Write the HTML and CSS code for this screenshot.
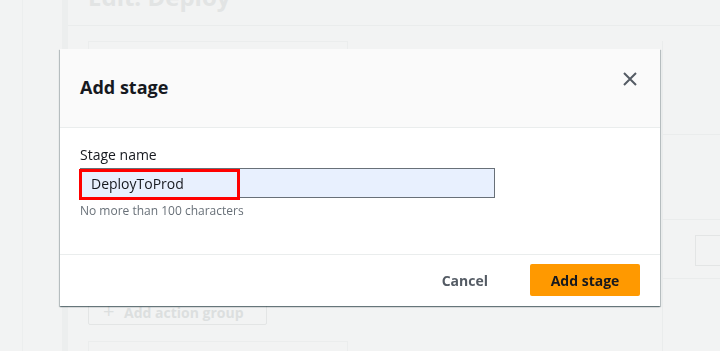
FILE: index.html
```html
<!DOCTYPE html>
<html lang="en">
<head>
  <meta charset="UTF-8" />
  <title>Edit: Deploy | Add stage</title>
  <meta name="viewport" content="width=device-width, initial-scale=1" />
  <link rel="stylesheet" href="styles.css">
</head>
<body>
  <!-- Página ao fundo (esmaecida pelo modal) -->
  <div class="page">
    <div class="rail"><div class="rail-line"></div></div>
    <div class="gutter"></div>
    <main class="main">
      <div class="main-head"><h1>Edit: Deploy</h1></div>
      <div class="stage-area">
        <div class="stage-col">
          <div class="group-card"></div>
          <button type="button" class="ghost-btn"><span class="plus">+</span> Add action group</button>
          <div class="group-card next"></div>
        </div>
        <div class="side-col">
          <div class="side-row first"></div>
          <div class="side-row second"></div>
          <div class="side-row third"><div class="side-box"></div></div>
        </div>
      </div>
    </main>
  </div>

  <!-- Modal -->
  <div class="overlay">
    <div class="modal">
      <div class="modal-header">
        <h2 class="modal-title">Add stage</h2>
        <button type="button" class="close-btn" aria-label="Close">
          <svg width="14" height="14" viewBox="0 0 14 14">
            <path d="M1 1 L13 13 M13 1 L1 13" stroke="#545b64" stroke-width="2" fill="none"/>
          </svg>
        </button>
      </div>
      <div class="modal-body">
        <label for="stageName" class="field-label">Stage name</label>
        <div class="input-wrap">
          <input type="text" id="stageName" class="field-input" value="DeployToProd">
          <div class="highlight"></div>
        </div>
        <div class="field-hint">No more than 100 characters</div>
      </div>
      <div class="modal-footer">
        <button type="button" class="cancel-btn">Cancel</button>
        <button type="button" class="primary-btn">Add stage</button>
      </div>
    </div>
  </div>
</body>
</html>
```

FILE: styles.css
```css
body {
  margin: 0;
  height: 351px;
  overflow: hidden;
  background: #f2f3f3;
  font-family: 'Open Sans', 'Noto Sans', Arial, sans-serif;
  color: #16191f;
}
button { font-family: inherit; }

/* fundo */
.page {
  display: flex;
  height: 351px;
}
.rail { width: 62px; }
.rail-line {
  width: 23px;
  height: 100%;
  border-right: 1px solid #eceeee;
  box-sizing: border-box;
}
.gutter {
  width: 6px;
  background: #eceeee;
}
.main {
  flex: 1;
  overflow: hidden;
}
.main-head {
  height: 25px;
  border-bottom: 1px solid #eaecec;
  padding-left: 20px;
  overflow: hidden;
}
.main-head h1 {
  margin: -17px 0 0 0;
  font-size: 24px;
  line-height: 28px;
  font-weight: 700;
  color: #e2e4e4;
}
.stage-area {
  display: flex;
  justify-content: space-between;
  padding: 15px 0 0 20px;
}
.stage-col { width: 260px; }
.group-card {
  height: 244px;
  border: 1px solid #ebeded;
  box-sizing: border-box;
}
.group-card.next { margin-top: 16px; }
.ghost-btn {
  margin-top: 11px;
  width: 179px;
  height: 29px;
  background: none;
  border: 1px solid #e3e5e5;
  border-radius: 2px;
  color: #dcdfdf;
  font-size: 14px;
  font-weight: 700;
  text-align: left;
  padding: 0 0 0 14px;
}
.ghost-btn .plus {
  font-size: 20px;
  font-weight: 400;
  margin-right: 6px;
}
.side-col {
  width: 57px;
  border-left: 1px solid #eaecec;
}
.side-row { border-bottom: 1px solid #eaecec; }
.side-row.first { height: 93px; }
.side-row.second { height: 84px; }
.side-row.third {
  height: 59px;
  padding: 15px 0 0 32px;
  box-sizing: border-box;
}
.side-box {
  height: 29px;
  border: 1px solid #e3e5e5;
  border-right: none;
}

/* modal */
.overlay {
  position: fixed;
  inset: 0;
  padding: 49px 0 0 60px;
}
.modal {
  width: 600px;
  background: #fff;
  box-shadow: 0 1px 1px 0 rgba(0, 28, 36, 0.35), 1px 1px 1px 0 rgba(0, 28, 36, 0.2), -1px 1px 1px 0 rgba(0, 28, 36, 0.2);
}
.modal-header {
  display: flex;
  justify-content: space-between;
  align-items: flex-start;
  background: #fafafa;
  border-bottom: 1px solid #eaeded;
  padding: 26px 23px 28px 20px;
}
.modal-title {
  margin: 0;
  font-size: 18px;
  line-height: 24px;
  font-weight: 700;
}
.close-btn {
  margin-top: -3px;
  background: none;
  border: none;
  padding: 0;
  cursor: pointer;
  line-height: 0;
}
.modal-body {
  padding: 16px 20px 34px 20px;
}
.field-label {
  display: block;
  font-size: 14px;
  line-height: 22px;
  margin-bottom: 2px;
}
.input-wrap {
  position: relative;
  width: 415px;
}
.field-input {
  display: block;
  width: 100%;
  box-sizing: border-box;
  height: 30px;
  margin: 0;
  padding: 0 10px;
  border: 1px solid #687078;
  border-radius: 0;
  background: #e8f0fe;
  font-family: inherit;
  font-size: 14px;
  color: #16191f;
  outline: none;
}
.highlight {
  position: absolute;
  left: -1px;
  top: 1px;
  width: 161px;
  height: 31px;
  border: 3px solid #ff0000;
  box-sizing: border-box;
}
.field-hint {
  margin-top: 4px;
  font-size: 12px;
  line-height: 18px;
  color: #687078;
}
.modal-footer {
  display: flex;
  justify-content: flex-end;
  align-items: center;
  gap: 22px;
  border-top: 1px solid #eaeded;
  padding: 9px 20px 10px 20px;
}
.cancel-btn {
  background: none;
  border: none;
  padding: 0 20px;
  font-size: 14px;
  font-weight: 700;
  color: #545b64;
  cursor: pointer;
}
.primary-btn {
  width: 110px;
  height: 32px;
  background: #ff9900;
  border: none;
  border-radius: 2px;
  font-size: 14px;
  font-weight: 700;
  color: #16191f;
  cursor: pointer;
}
```
